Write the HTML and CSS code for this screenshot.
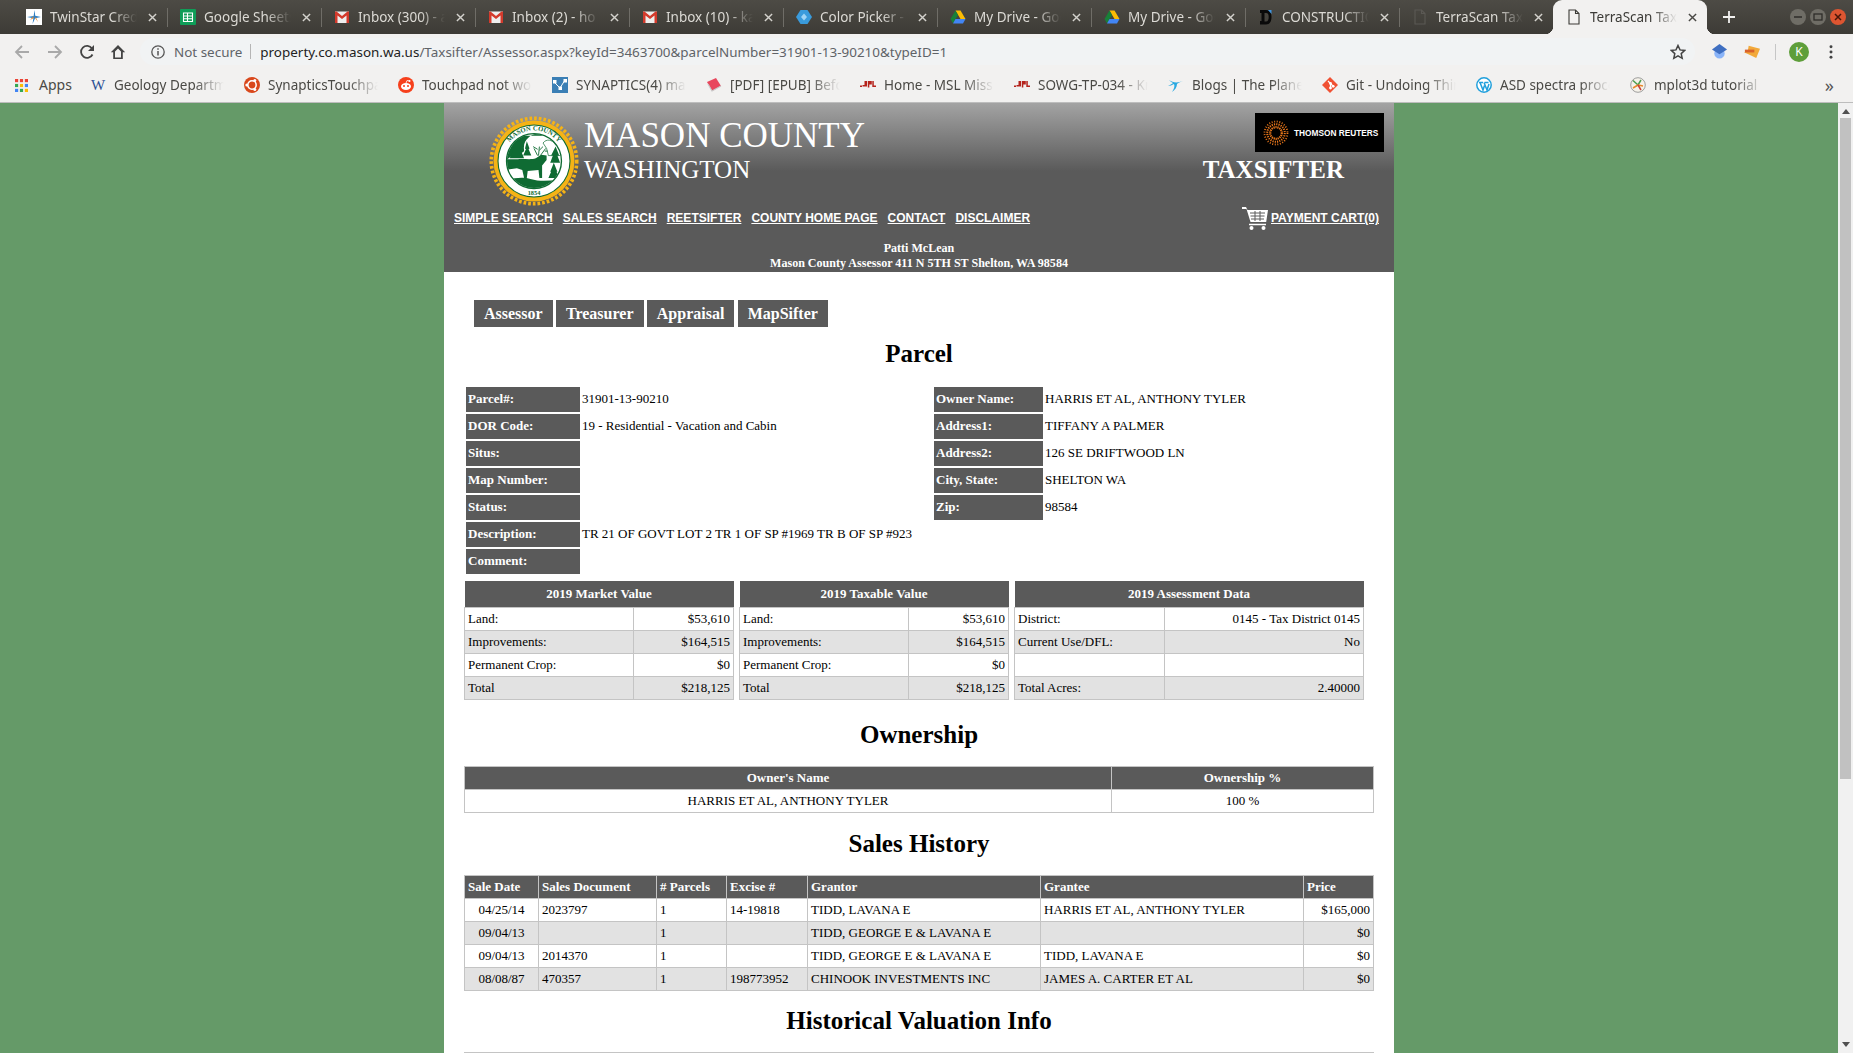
FILE: index.html
```html
<!DOCTYPE html>
<html lang="en">
<head>
<meta charset="utf-8">
<title>TerraScan TaxSifter</title>
<link rel="stylesheet" href="styles.css">
</head>
<body>
<svg class="defs" xmlns="http://www.w3.org/2000/svg">
  <symbol id="i-x" viewBox="0 0 10 10"><path d="M1 1l8 8M9 1l-8 8" fill="none" stroke="currentColor" stroke-width="1.6"/></symbol>
  <symbol id="i-twin" viewBox="0 0 16 16"><rect width="16" height="16" fill="#fff"/><path d="M8.6 1L7.6 7 1 8l6.4 1.2L6.5 15l2.6-5.8L15 8 9.2 6.8z" fill="#2d7fc4"/><path d="M7.6 7L4 11l3.4-1.800z M9.200 9.200L12 13 9.800 8z" fill="#e8892a"/></symbol>
  <symbol id="i-sheet" viewBox="0 0 16 16"><rect width="16" height="16" rx="1" fill="#0f9d58"/><path d="M3.500 4h9v8.500h-9zM3.500 7h9M3.500 9.800h9M7.500 4v8.500" fill="none" stroke="#fff" stroke-width="1.100"/></symbol>
  <symbol id="i-gmail" viewBox="0 0 16 16"><rect x="1" y="2.500" width="14" height="11.500" fill="#eee"/><path d="M1 2.500h1.500L8 7l5.500-4.500H15V14h-2.500V6.500L8 10 3.500 6.500V14H1z" fill="#d33a2c"/></symbol>
  <symbol id="i-picker" viewBox="0 0 16 16"><path d="M4.500 1h7L16 8l-4.500 7h-7L0 8z" fill="#3a9bdc"/><path d="M8 4.500L11 8 8 11.500 5 8z" fill="#9fd4f5"/></symbol>
  <symbol id="i-drive" viewBox="0 0 16 16"><path d="M5.500 1.500h5l5 8.500h-5z" fill="#fbbc04"/><path d="M5.500 1.500L.5 10 3 14.500 8 6z" fill="#188038"/><path d="M3 14.500h10l2.500-4.500H5.500z" fill="#4285f4"/></symbol>
  <symbol id="i-cons" viewBox="0 0 16 16"><path d="M2 1h6c4 0 5.500 3 5.500 7S12 15.500 8 15.500H2V12h1.500V4H2zM6.500 4v8.500H8c2 0 2.700-2 2.700-4.500S10 4 8 4z" fill="#0a0a0a"/><path d="M10 1l3.500 0 0 4z" fill="#3d94e0"/></symbol>
  <symbol id="i-doc" viewBox="0 0 16 16"><path d="M3 1h6.500L13 4.500V15H3zM9.500 1v3.500H13" fill="none" stroke="currentColor" stroke-width="1.100"/></symbol>
  <symbol id="i-jpl" viewBox="0 0 16 16"><path d="M4.500 4h2.500v5.500H2.500V8h2zM7.800 4h4v3.500H9.300v3H7.800zM12.300 4h1.500v4.500H16V10h-3.700zM0 8.500h2v1.500H0z" fill="#b5231c"/></symbol>
</svg>

<div class="tabstrip">
  <div class="tab sep"><svg class="fav"><use href="#i-twin"/></svg><span class="tab-title">TwinStar Credit</span><svg class="tab-x"><use href="#i-x"/></svg></div>
  <div class="tab sep"><svg class="fav"><use href="#i-sheet"/></svg><span class="tab-title">Google Sheets</span><svg class="tab-x"><use href="#i-x"/></svg></div>
  <div class="tab sep"><svg class="fav"><use href="#i-gmail"/></svg><span class="tab-title">Inbox (300) - a</span><svg class="tab-x"><use href="#i-x"/></svg></div>
  <div class="tab sep"><svg class="fav"><use href="#i-gmail"/></svg><span class="tab-title">Inbox (2) - ho</span><svg class="tab-x"><use href="#i-x"/></svg></div>
  <div class="tab sep"><svg class="fav"><use href="#i-gmail"/></svg><span class="tab-title">Inbox (10) - ka</span><svg class="tab-x"><use href="#i-x"/></svg></div>
  <div class="tab sep"><svg class="fav"><use href="#i-picker"/></svg><span class="tab-title">Color Picker - Ch</span><svg class="tab-x"><use href="#i-x"/></svg></div>
  <div class="tab sep"><svg class="fav"><use href="#i-drive"/></svg><span class="tab-title">My Drive - Google</span><svg class="tab-x"><use href="#i-x"/></svg></div>
  <div class="tab sep"><svg class="fav"><use href="#i-drive"/></svg><span class="tab-title">My Drive - Google</span><svg class="tab-x"><use href="#i-x"/></svg></div>
  <div class="tab sep"><svg class="fav"><use href="#i-cons"/></svg><span class="tab-title">CONSTRUCTION</span><svg class="tab-x"><use href="#i-x"/></svg></div>
  <div class="tab"><svg class="fav fav-dim"><use href="#i-doc"/></svg><span class="tab-title">TerraScan Tax</span><svg class="tab-x"><use href="#i-x"/></svg></div>
  <div class="tab tab-active"><svg class="fav"><use href="#i-doc"/></svg><span class="tab-title">TerraScan Tax</span><svg class="tab-x"><use href="#i-x"/></svg></div>
  <svg class="newtab" viewBox="0 0 12 12"><path d="M6 0v12M0 6h12" stroke="#f2f1f0" stroke-width="1.800"/></svg>
  <div class="winbtns">
    <span class="winbtn"><svg viewBox="0 0 16 16"><path d="M4 8h8" stroke="#2e2d2a" stroke-width="1.500"/></svg></span>
    <span class="winbtn"><svg viewBox="0 0 16 16"><rect x="4" y="5" width="8" height="6" fill="none" stroke="#2e2d2a" stroke-width="1.300"/></svg></span>
    <span class="winbtn winbtn-close"><svg viewBox="0 0 16 16"><path d="M5 5l6 6M11 5l-6 6" stroke="#4a1608" stroke-width="1.500"/></svg></span>
  </div>
</div>

<div class="toolbar">
  <svg class="tb-ic tb-back" viewBox="0 0 16 16"><path d="M15 8H2M8 2L2 8l6 6" fill="none" stroke="currentColor" stroke-width="1.800"/></svg>
  <svg class="tb-ic tb-fwd" viewBox="0 0 16 16"><path d="M1 8h13M8 2l6 6-6 6" fill="none" stroke="currentColor" stroke-width="1.800"/></svg>
  <svg class="tb-ic tb-reload" viewBox="0 0 16 16"><path d="M13.500 10.500A6 6 0 1 1 13 4.500" fill="none" stroke="currentColor" stroke-width="1.800"/><path d="M15 1v6H9z" fill="currentColor"/></svg>
  <svg class="tb-ic tb-home" viewBox="0 0 16 16"><path d="M8 1L.8 8.200h2.400V15h9.600V8.200h2.400zM5 13.500V7.500l3-3 3 3v6z" fill="currentColor"/></svg>
  <div class="omnibox">
    <svg class="omni-info" viewBox="0 0 14 14"><circle cx="7" cy="7" r="6.200" fill="none" stroke="currentColor" stroke-width="1.300"/><path d="M7 6v4.500M7 3.200v1.500" stroke="currentColor" stroke-width="1.500"/></svg>
    <span class="omni-secure">Not secure</span>
    <span class="omni-div"></span>
    <span class="omni-url"><span class="omni-host">property.co.mason.wa.us</span>/Taxsifter/Assessor.aspx?keyId=3463700&amp;parcelNumber=31901-13-90210&amp;typeID=1</span>
    <svg class="omni-star" viewBox="0 0 16 16"><path d="M8 1.500l2 4.400 4.800.5-3.600 3.200 1 4.700L8 11.900l-4.200 2.400 1-4.700L1.200 6.400 6 5.900z" fill="none" stroke="currentColor" stroke-width="1.500"/></svg>
  </div>
  <svg class="ext ext-blue" viewBox="0 0 18 18"><circle cx="9" cy="11" r="5.500" fill="#8ab4f8"/><path d="M9 1l8 6-8 5-8-5z" fill="#3f6fc1"/></svg>
  <svg class="ext ext-orange" viewBox="0 0 18 18"><path d="M6 3l12 3-4 10-10-5-3-1 4-1z" fill="#f2a93a"/><path d="M2 7h10v3H2z" fill="#d9622b"/></svg>
  <span class="tb-div"></span>
  <span class="avatar">K</span>
  <svg class="tb-menu" viewBox="0 0 4 16"><circle cx="2" cy="2" r="1.700"/><circle cx="2" cy="8" r="1.700"/><circle cx="2" cy="14" r="1.700"/></svg>
</div>

<div class="bookmarks">
  <div class="bm bm-apps"><svg class="fav" viewBox="0 0 14 14"><rect width="3.400" height="3.400" fill="#ea4335"/><rect x="5.300" width="3.400" height="3.400" fill="#ea4335"/><rect x="10.600" width="3.400" height="3.400" fill="#ea4335"/><rect y="5.300" width="3.400" height="3.400" fill="#34a853"/><rect x="5.300" y="5.300" width="3.400" height="3.400" fill="#fbbc04"/><rect x="10.600" y="5.300" width="3.400" height="3.400" fill="#4285f4"/><rect y="10.600" width="3.400" height="3.400" fill="#4285f4"/><rect x="5.300" y="10.600" width="3.400" height="3.400" fill="#34a853"/><rect x="10.600" y="10.600" width="3.400" height="3.400" fill="#fbbc04"/></svg><span>Apps</span></div>
  <div class="bm"><span class="fav bm-w">W</span><span class="bm-title">Geology Department</span></div>
  <div class="bm"><svg class="fav" viewBox="0 0 16 16"><circle cx="8" cy="8" r="8" fill="#d9481c"/><circle cx="8" cy="8" r="4.200" fill="none" stroke="#fff" stroke-width="1.500"/><circle cx="2.800" cy="8" r="1.500" fill="#fff"/><circle cx="10.800" cy="3.500" r="1.500" fill="#fff"/><circle cx="10.800" cy="12.500" r="1.500" fill="#fff"/></svg><span class="bm-title">SynapticsTouchpad</span></div>
  <div class="bm"><svg class="fav" viewBox="0 0 16 16"><circle cx="8" cy="8" r="8" fill="#f6401c"/><ellipse cx="8" cy="9.500" rx="5" ry="3.400" fill="#fff"/><circle cx="6" cy="9" r="1" fill="#f6401c"/><circle cx="10" cy="9" r="1" fill="#f6401c"/><circle cx="11.500" cy="4" r="1" fill="#fff"/><path d="M8 6l1-2.500 2.500.5" fill="none" stroke="#fff" stroke-width=".8"/></svg><span class="bm-title">Touchpad not working</span></div>
  <div class="bm"><svg class="fav" viewBox="0 0 16 16"><rect width="16" height="16" fill="#3b7fb5"/><path d="M2 5l6 6 5-8" fill="none" stroke="#fff" stroke-width="1"/><rect x="1" y="3" width="3.500" height="3.500" fill="#fff"/><rect x="6.500" y="9.500" width="3.500" height="3.500" fill="#fff"/><rect x="11.500" y="2" width="3.500" height="3.500" fill="#fff"/></svg><span class="bm-title">SYNAPTICS(4) man page</span></div>
  <div class="bm"><svg class="fav" viewBox="0 0 16 16"><path d="M1 5l9-4 5 8-9 5z" fill="#e8475d"/><path d="M2 7l4 7 9-5" fill="none" stroke="#c9c9c9" stroke-width="1.200"/></svg><span class="bm-title">[PDF] [EPUB] Before</span></div>
  <div class="bm"><svg class="fav"><use href="#i-jpl"/></svg><span class="bm-title">Home - MSL Mission</span></div>
  <div class="bm"><svg class="fav"><use href="#i-jpl"/></svg><span class="bm-title">SOWG-TP-034 - Knowledge</span></div>
  <div class="bm"><svg class="fav" viewBox="0 0 16 16"><path d="M1 3c4 3 9 3 14 1-3 1-5 2-6 3 0 3-2 6-5 8 2-3 3-6 2-8-2 1-4 2-6 2 2-1 4-2 5-3C3 5 2 4 1 3z" fill="#29a9e1"/></svg><span class="bm-title">Blogs | The Planetary</span></div>
  <div class="bm"><svg class="fav" viewBox="0 0 16 16"><path d="M8 0l8 8-8 8-8-8z" fill="#f05133"/><path d="M6 4l2.500 2.500v5M8.500 6.500l3 3" fill="none" stroke="#fff" stroke-width="1.200"/><circle cx="8.500" cy="11" r="1.400" fill="#fff"/><circle cx="8.500" cy="6.500" r="1.400" fill="#fff"/><circle cx="11.200" cy="9.300" r="1.400" fill="#fff"/></svg><span class="bm-title">Git - Undoing Things</span></div>
  <div class="bm"><svg class="fav" viewBox="0 0 16 16"><circle cx="8" cy="8" r="7.200" fill="#fff" stroke="#21a0dc" stroke-width="1.500"/><path d="M3 5.500h4M8.500 5.500h4M4 5.500l3 7.500 1.500-4.500M8 5.500l3 7.500 2-6" fill="none" stroke="#21a0dc" stroke-width="1.500"/></svg><span class="bm-title">ASD spectra processing</span></div>
  <div class="bm"><svg class="fav" viewBox="0 0 16 16"><circle cx="8" cy="8" r="7.300" fill="#f5f2ea" stroke="#888" stroke-width=".8"/><path d="M8 8L3 3.500M8 8l3-5" stroke="#4c9f50" stroke-width="1.500"/><path d="M8 8l5 1M8 8l-5 3" stroke="#e8892a" stroke-width="1.500"/><path d="M8 8l3 5" stroke="#c8413a" stroke-width="1.500"/></svg><span class="bm-title">mplot3d tutorial</span></div>
  <span class="bm-more">»</span>
</div>

<div class="viewport">
  <div class="canvas">
    <div class="page">
      <header class="site-head">
        <div class="head-top">
          <svg class="seal" viewBox="0 0 100 100" xmlns="http://www.w3.org/2000/svg">
            <defs>
              <path id="seal-arc" d="M16 50a34 34 0 0 1 68 0"/>
              <clipPath id="seal-in"><circle cx="50" cy="50" r="30"/></clipPath>
            </defs>
            <circle cx="50" cy="50" r="47.500" fill="none" stroke="#f5b316" stroke-width="4" stroke-dasharray="3 2.200"/>
            <circle cx="50" cy="50" r="45" fill="#f5b316"/>
            <circle cx="50" cy="50" r="40" fill="#fff" stroke="#0f6b33" stroke-width="1.200"/>
            <text class="seal-text"><textPath href="#seal-arc" startOffset="50%" text-anchor="middle">MASON   COUNTY</textPath></text>
            <text class="seal-text seal-year" x="50" y="88" text-anchor="middle">1854</text>
            <circle cx="50" cy="50" r="30.500" fill="#fff" stroke="#0f6b33" stroke-width="1.500"/>
            <g clip-path="url(#seal-in)" fill="#0f6b33">
              <path d="M18 50V22h42c-6-4-12-2-16 2-4 3-6 8-5 14 0 3-5 4-12 5l-9 7z"/>
              <path d="M31 20l5 14-2 1 5 12H23l5-12-2-1z"/>
              <path d="M42 28l3 8-1 1 3 7h-9l3-7-1-1z"/>
              <path d="M60 30c4-5 10-4 14 2l8 4v8H66l-2-8z" fill="none" stroke="#0f6b33" stroke-width=".8"/>
              <path d="M74 34l4 10-2 0 3 8H68l3-8-2 0z"/>
              <path d="M18 48h14c6-1 14 1 20-1l6-4 6 1v5l-5 6v14h-3l-1-9-12 1-1 8h-3l-2-9-6-2-13 2z"/>
              <path d="M72 52l4 10-1 0 3 7H66l3-7-1 0z"/>
              <path d="M20 72c8-4 20-4 26-2 10 3 20 2 30 1v12H20z"/>
              <path d="M54 44l-4-8M55 44l1-10M54 37l-5-3M56 38l4-4M57 44l6-8M62 39l3 0" fill="none" stroke="#0f6b33" stroke-width="1"/>
            </g>
          </svg>
          <div class="head-titles">
            <div class="head-county">MASON COUNTY</div>
            <div class="head-state">WASHINGTON</div>
          </div>
          <div class="head-right">
            <svg class="tr-logo" viewBox="0 0 129 39" xmlns="http://www.w3.org/2000/svg">
              <rect width="129" height="39" fill="#000"/>
              <g fill="none" stroke="#e8761a">
                <circle cx="21" cy="20" r="11.500" stroke-width="1.800" stroke-dasharray="1 1.600"/>
                <circle cx="21" cy="20" r="8.800" stroke-width="2" stroke-dasharray="1.200 1.100"/>
                <circle cx="21" cy="20" r="5.800" stroke-width="2.200" stroke-dasharray="1.300 .7"/>
              </g>
              <text class="tr-text" x="39" y="22.500">THOMSON REUTERS</text>
            </svg>
            <div class="head-product">TAXSIFTER</div>
          </div>
        </div>
        <nav class="head-nav">
          <div class="nav-links">
            <a class="nav-link" href="#">SIMPLE SEARCH</a>
            <a class="nav-link" href="#">SALES SEARCH</a>
            <a class="nav-link" href="#">REETSIFTER</a>
            <a class="nav-link" href="#">COUNTY HOME PAGE</a>
            <a class="nav-link" href="#">CONTACT</a>
            <a class="nav-link" href="#">DISCLAIMER</a>
          </div>
          <div class="nav-cart">
            <svg class="cart" viewBox="0 0 26 24" xmlns="http://www.w3.org/2000/svg"><path d="M0 1h4l1.500 3H26l-1.800 12H8.500L4.500 3H0z" fill="#fff"/><path d="M8 7h15M8.500 10h14M9 13h13M13 5v10M18 5v10" stroke="#5a5a5a" stroke-width="1"/><path d="M7 18.500h17" stroke="#fff" stroke-width="1.500"/><circle cx="9.500" cy="22" r="2" fill="#fff"/><circle cx="21.500" cy="22" r="2" fill="#fff"/></svg>
            <a class="nav-link" href="#">PAYMENT CART(0)</a>
          </div>
        </nav>
        <div class="head-addr">
          <div>Patti McLean</div>
          <div>Mason County Assessor 411 N 5TH ST Shelton, WA 98584</div>
        </div>
      </header>

      <main class="content">
        <div class="tabs">
          <a class="tabbtn">Assessor</a>
          <a class="tabbtn">Treasurer</a>
          <a class="tabbtn">Appraisal</a>
          <a class="tabbtn">MapSifter</a>
        </div>

        <h2 class="sec-title sec-parcel">Parcel</h2>
        <div class="parcel">
          <div class="pgrid pgrid-left">
            <div class="plabel">Parcel#:</div><div class="pvalue">31901-13-90210</div>
            <div class="plabel">DOR Code:</div><div class="pvalue">19 - Residential - Vacation and Cabin</div>
            <div class="plabel">Situs:</div><div class="pvalue"></div>
            <div class="plabel">Map Number:</div><div class="pvalue"></div>
            <div class="plabel">Status:</div><div class="pvalue"></div>
            <div class="plabel">Description:</div><div class="pvalue">TR 21 OF GOVT LOT 2 TR 1 OF SP #1969 TR B OF SP #923</div>
            <div class="plabel">Comment:</div><div class="pvalue"></div>
          </div>
          <div class="pgrid pgrid-right">
            <div class="plabel">Owner Name:</div><div class="pvalue">HARRIS ET AL, ANTHONY TYLER</div>
            <div class="plabel">Address1:</div><div class="pvalue">TIFFANY A PALMER</div>
            <div class="plabel">Address2:</div><div class="pvalue">126 SE DRIFTWOOD LN</div>
            <div class="plabel">City, State:</div><div class="pvalue">SHELTON WA</div>
            <div class="plabel">Zip:</div><div class="pvalue">98584</div>
          </div>
        </div>

        <div class="values">
          <table class="tbl tbl-val">
            <colgroup><col class="c-v1"><col></colgroup>
            <thead><tr><th colspan="2">2019 Market Value</th></tr></thead>
            <tbody>
              <tr><td>Land:</td><td class="r">$53,610</td></tr>
              <tr class="alt"><td>Improvements:</td><td class="r">$164,515</td></tr>
              <tr><td>Permanent Crop:</td><td class="r">$0</td></tr>
              <tr class="alt"><td>Total</td><td class="r">$218,125</td></tr>
            </tbody>
          </table>
          <table class="tbl tbl-val">
            <colgroup><col class="c-v1"><col></colgroup>
            <thead><tr><th colspan="2">2019 Taxable Value</th></tr></thead>
            <tbody>
              <tr><td>Land:</td><td class="r">$53,610</td></tr>
              <tr class="alt"><td>Improvements:</td><td class="r">$164,515</td></tr>
              <tr><td>Permanent Crop:</td><td class="r">$0</td></tr>
              <tr class="alt"><td>Total</td><td class="r">$218,125</td></tr>
            </tbody>
          </table>
          <table class="tbl tbl-val tbl-assess">
            <colgroup><col class="c-a1"><col></colgroup>
            <thead><tr><th colspan="2">2019 Assessment Data</th></tr></thead>
            <tbody>
              <tr><td>District:</td><td class="r">0145 - Tax District 0145</td></tr>
              <tr class="alt"><td>Current Use/DFL:</td><td class="r">No</td></tr>
              <tr><td></td><td></td></tr>
              <tr class="alt"><td>Total Acres:</td><td class="r">2.40000</td></tr>
            </tbody>
          </table>
        </div>

        <h2 class="sec-title sec-own">Ownership</h2>
        <table class="tbl tbl-full tbl-lined">
          <colgroup><col class="c-o1"><col></colgroup>
          <thead><tr><th>Owner's Name</th><th>Ownership %</th></tr></thead>
          <tbody><tr><td class="c">HARRIS ET AL, ANTHONY TYLER</td><td class="c">100 %</td></tr></tbody>
        </table>

        <h2 class="sec-title sec-sales">Sales History</h2>
        <table class="tbl tbl-full tbl-lined tbl-sales">
          <colgroup><col class="c-s1"><col class="c-s2"><col class="c-s3"><col class="c-s4"><col class="c-s5"><col class="c-s6"><col></colgroup>
          <thead><tr><th>Sale Date</th><th>Sales Document</th><th># Parcels</th><th>Excise #</th><th>Grantor</th><th>Grantee</th><th>Price</th></tr></thead>
          <tbody>
            <tr><td class="c">04/25/14</td><td>2023797</td><td>1</td><td>14-19818</td><td>TIDD, LAVANA E</td><td>HARRIS ET AL, ANTHONY TYLER</td><td class="r">$165,000</td></tr>
            <tr class="alt"><td class="c">09/04/13</td><td></td><td>1</td><td></td><td>TIDD, GEORGE E &amp; LAVANA E</td><td></td><td class="r">$0</td></tr>
            <tr><td class="c">09/04/13</td><td>2014370</td><td>1</td><td></td><td>TIDD, GEORGE E &amp; LAVANA E</td><td>TIDD, LAVANA E</td><td class="r">$0</td></tr>
            <tr class="alt"><td class="c">08/08/87</td><td>470357</td><td>1</td><td>198773952</td><td>CHINOOK INVESTMENTS INC</td><td>JAMES A. CARTER ET AL</td><td class="r">$0</td></tr>
          </tbody>
        </table>

        <h2 class="sec-title sec-hist">Historical Valuation Info</h2>
        <div class="hist-rule"></div>
      </main>
    </div>
  </div>
  <div class="scrollbar">
    <span class="sb-up"></span>
    <span class="sb-thumb"></span>
    <span class="sb-down"></span>
  </div>
</div>
</body>
</html>
```
FILE: styles.css
```css
* { box-sizing: border-box; }
html, body { margin: 0; height: 100%; overflow: hidden; }
body { display: flex; flex-direction: column; height: 1053px; font-family: "Liberation Serif", serif; font-size: 13px; color: #000; }
.defs { display: none; }

/* Browser chrome */
.tabstrip { height: 34px; flex: none; display: flex; align-items: stretch; padding-left: 14px; background: linear-gradient(#4d4b45, #3d3b36); font-family: "Noto Sans", sans-serif; font-size: 13.5px; color: #dcdad5; }
.tab { position: relative; width: 154px; flex: none; display: flex; align-items: center; padding: 0 10px 0 12px; }
.tab.sep::after { content: ""; position: absolute; right: 0; top: 8px; bottom: 7px; width: 1px; background: #6f6d67; }
.fav { width: 16px; height: 16px; flex: none; }
.fav-dim { color: #5b5954; }
.tab-title { width: 87px; margin-left: 8px; white-space: nowrap; overflow: hidden; -webkit-mask-image: linear-gradient(to right, #000 62px, transparent); mask-image: linear-gradient(to right, #000 62px, transparent); }
.tab-x { width: 9px; height: 9px; margin-left: 11px; flex: none; color: #d4d2cd; }
.tab-active { background: #f2f1f0; color: #3c3b37; border-radius: 9px 9px 0 0; margin-left: -1px; margin-right: 1px; padding-left: 13px; }
.tab-active .tab-x { color: #4a4945; }
.tab-active::before, .tab-active::after { content: ""; position: absolute; bottom: 0; width: 8px; height: 8px; }
.tab-active::before { left: -8px; background: radial-gradient(circle at 0 0, transparent 8px, #f2f1f0 8.5px); }
.tab-active::after { right: -8px; background: radial-gradient(circle at 100% 0, transparent 8px, #f2f1f0 8.5px); }
.newtab { width: 12px; height: 12px; align-self: center; margin-left: 15px; }
.winbtns { display: flex; align-items: center; gap: 4px; margin-left: 55px; }
.winbtn { width: 16px; height: 16px; border-radius: 50%; background: #6f6d66; display: block; }
.winbtn svg { display: block; width: 16px; height: 16px; }
.winbtn-close { background: #dd5531; }

.toolbar { height: 35px; flex: none; display: flex; align-items: center; background: #f2f1f0; padding-left: 14px; }
.tb-ic { width: 16px; height: 16px; flex: none; }
.tb-back, .tb-fwd { color: #a9a9a9; }
.tb-fwd { margin-left: 17px; }
.tb-reload { margin-left: 16px; color: #444; }
.tb-home { margin-left: 15px; color: #444; }
.omnibox { width: 1555px; height: 27px; margin-left: 14px; flex: none; display: flex; align-items: center; border-radius: 14px; background: #f1f3f4; padding-left: 11px; font-family: "Noto Sans", sans-serif; font-size: 13.45px; color: #5f6368; position: relative; }
.omni-info { width: 14px; height: 14px; flex: none; color: #555; }
.omni-secure { margin-left: 9px; white-space: nowrap; }
.omni-div { width: 1px; height: 15px; background: #b5b5b5; margin-left: 8px; }
.omni-url { margin-left: 9px; white-space: nowrap; }
.omni-host { color: #222; }
.omni-star { width: 16px; height: 16px; margin-left: auto; margin-right: 9px; color: #444; flex: none; }
.ext { width: 17px; height: 17px; flex: none; }
.ext-blue { margin-left: 16px; }
.ext-orange { margin-left: 15px; }
.tb-div { width: 1px; height: 16px; background: #c6c6c6; margin-left: 15px; }
.avatar { width: 20px; height: 20px; border-radius: 50%; background: #5e9e3a; color: #fff; font-family: "Noto Sans", sans-serif; font-size: 12px; line-height: 20px; text-align: center; margin-left: 13px; flex: none; }
.tb-menu { width: 4px; height: 14px; margin-left: 20px; fill: #444; flex: none; }

.bookmarks { height: 34px; flex: none; display: flex; align-items: center; background: #f2f1f0; padding: 0 0 1px 7px; border-bottom: 1px solid #bdbdbd; font-family: "Noto Sans", sans-serif; font-size: 13.5px; color: #4a4945; position: relative; }
.bm { width: 154px; flex: none; display: flex; align-items: center; padding-left: 8px; }
.bm-apps { width: 75px; font-size: 14px; line-height: 18px; }
.bm-apps .fav { width: 13px; height: 13px; margin-right: 11px; }
.bm-title { width: 110px; margin-left: 8px; white-space: nowrap; overflow: hidden; -webkit-mask-image: linear-gradient(to right, #000 80px, transparent); mask-image: linear-gradient(to right, #000 80px, transparent); }
.bm-w { font-family: "Liberation Serif", serif; font-size: 15px; line-height: 16px; color: #2b4f93; text-align: center; }
.bm-more { position: absolute; right: 19px; top: 4px; font-size: 18px; color: #555; }

/* Page viewport */
.viewport { flex: 1; min-height: 0; display: flex; overflow: hidden; background: #659a68; }
.canvas { flex: 1; min-width: 0; display: flex; justify-content: center; overflow: hidden; }
.page { width: 950px; height: 1400px; flex: none; background: #fff; }
.scrollbar { width: 15px; flex: none; display: flex; flex-direction: column; align-items: center; background: #f1f1f1; }
.sb-up { margin-top: 6px; border: 4px solid transparent; border-top: 0; border-bottom: 5px solid #505050; }
.sb-thumb { width: 11px; height: 661px; margin-top: 4px; background: #c1c1c1; }
.sb-down { margin-top: auto; margin-bottom: 6px; border: 4px solid transparent; border-bottom: 0; border-top: 5px solid #505050; }

/* Site header */
.site-head { height: 169px; background: linear-gradient(#a3a3a3 0, #5a5a5a 68px); color: #fff; }
.head-top { height: 103px; display: flex; padding: 10px 10px 0 45px; }
.seal { width: 90px; height: 90px; flex: none; margin-top: 3px; }
.seal-text { font-family: "Liberation Serif", serif; font-size: 7.500px; font-weight: bold; fill: #0f6b33; }
.seal-year { font-size: 7px; }
.head-titles { margin-left: 5px; }
.head-county { font-size: 35px; line-height: 36px; margin-top: 5px; }
.head-state { font-size: 25px; line-height: 30px; margin-top: 1px; }
.head-right { margin-left: auto; display: flex; flex-direction: column; align-items: flex-end; }
.tr-logo { width: 129px; height: 39px; display: block; }
.tr-text { font-family: "Liberation Sans", sans-serif; font-size: 8.300px; font-weight: bold; fill: #fff; }
.head-product { font-size: 25px; font-weight: bold; line-height: 30px; margin: 3px 40px 0 0; }
.head-nav { display: flex; align-items: center; justify-content: space-between; height: 24px; padding: 0 15px 0 10px; font-family: "Liberation Sans", sans-serif; font-size: 12px; font-weight: bold; }
.nav-links { display: flex; gap: 10px; }
.nav-link { color: #fff; text-decoration: underline; }
.nav-cart { display: flex; align-items: center; gap: 3px; }
.cart { width: 26px; height: 24px; }
.head-addr { margin-top: 11px; font-size: 12.05px; line-height: 15px; font-weight: bold; text-align: center; }

/* Content */
.content { padding: 28px 20px 0; }
.tabs { display: flex; gap: 3.300px; padding-left: 10px; }
.tabbtn { height: 27px; padding: 0 10px; background: #5a5a5a; color: #fff; font-size: 16px; font-weight: bold; line-height: 27px; }
.sec-title { margin: 0 0 18px; font-size: 25px; font-weight: bold; line-height: 28px; text-align: center; }
.sec-parcel { margin-top: 13px; margin-bottom: 19px; }
.sec-own { margin-top: 21px; margin-bottom: 17px; }
.sec-sales { margin-top: 17px; margin-bottom: 17px; }
.sec-hist { margin-top: 16px; margin-bottom: 17px; }
.parcel { display: flex; padding-left: 2px; }
.pgrid { display: grid; grid-auto-rows: 25px; row-gap: 2px; column-gap: 2px; align-items: start; align-content: start; }
.pgrid-left { width: 468px; grid-template-columns: 114px 1fr; }
.pgrid-right { flex: 1; grid-template-columns: 109px 1fr; }
.plabel { height: 25px; padding-left: 2px; background: #5a5a5a; color: #fff; font-weight: bold; line-height: 23px; }
.pvalue { white-space: nowrap; line-height: 23px; }
.values { display: flex; gap: 5px; margin-top: 7px; }
.tbl { border-collapse: collapse; table-layout: fixed; font-size: 13px; }
.tbl th { height: 23px; padding: 0 3px; background: #5a5a5a; color: #fff; font-weight: bold; }
.tbl td { height: 23px; padding: 0 3px; border: 1px solid #c4c4c4; white-space: nowrap; }
.tbl .alt td { background: #e2e2e2; }
.tbl .r { text-align: right; }
.tbl .c { text-align: center; }
.tbl-val { width: 270px; }
.tbl-val th { height: 26px; }
.tbl-assess { width: 350px; }
.c-v1 { width: 169px; }
.c-a1 { width: 150px; }
.tbl-full { width: 910px; }
.tbl-lined th { border: 1px solid #c4c4c4; }
.c-o1 { width: 647px; }
.tbl-sales th { text-align: left; }
.c-s1 { width: 74px; }
.c-s2 { width: 118px; }
.c-s3 { width: 70px; }
.c-s4 { width: 81px; }
.c-s5 { width: 233px; }
.c-s6 { width: 263px; }
.hist-rule { height: 1px; background: #c4c4c4; }
```
